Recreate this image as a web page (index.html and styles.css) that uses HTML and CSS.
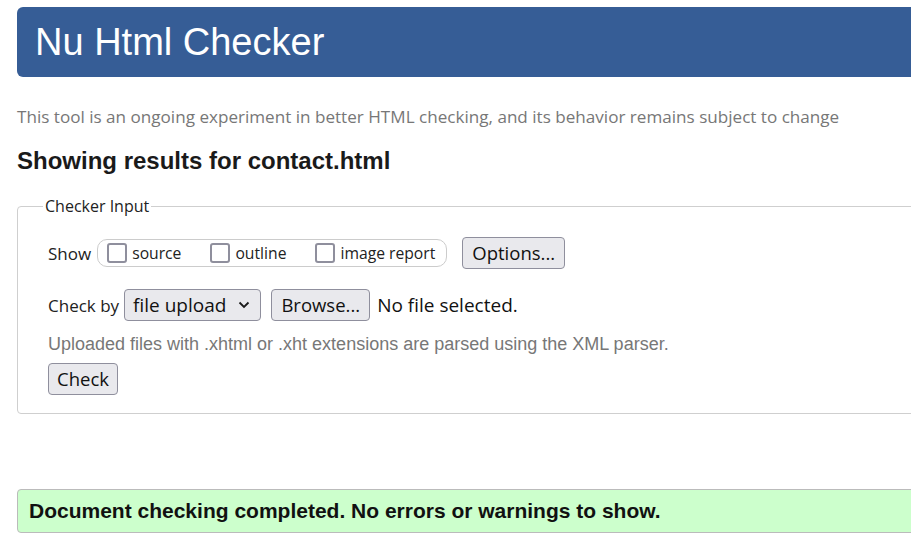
FILE: index.html
```html
<!DOCTYPE html>
<html lang="en">
<head>
<meta charset="utf-8">
<title>Nu Html Checker</title>
<link rel="stylesheet" href="styles.css">
</head>
<body>
<div class="page">
  <h1 class="title">Nu Html Checker</h1>
  <p class="lead">This tool is an ongoing experiment in better HTML checking, and its behavior remains subject to change</p>
  <h2 class="results">Showing results for contact.html</h2>
  <fieldset class="input">
    <legend class="legend">Checker Input</legend>
    <div class="row">
      <span class="label">Show</span>
      <span class="group">
        <label class="opt"><span class="cb"></span>source</label>
        <label class="opt"><span class="cb"></span>outline</label>
        <label class="opt"><span class="cb"></span>image report</label>
      </span>
      <button class="btn options">Options...</button>
    </div>
    <div class="row row2">
      <span class="label">Check by</span>
      <span class="select">file upload
        <svg class="chev" width="12" height="8" viewBox="0 0 12 8"><path d="M1.5 1.5 L6 6 L10.5 1.5" fill="none" stroke="#1a1a1a" stroke-width="1.8"/></svg>
      </span>
      <button class="btn">Browse...</button>
      <span class="nofile">No file selected.</span>
    </div>
    <p class="hint">Uploaded files with .xhtml or .xht extensions are parsed using the XML parser.</p>
    <button class="btn check">Check</button>
  </fieldset>
  <div class="success">Document checking completed. No errors or warnings to show.</div>
</div>
</body>
</html>
```
FILE: styles.css
```css
html, body {
  margin: 0;
  padding: 0;
  overflow: hidden;
  background: #fff;
}
body {
  padding: 7px 0 0 17px;
}
.page {
  width: 1000px;
}
.title {
  margin: 0;
  height: 70px;
  box-sizing: border-box;
  padding: 0 0 0 18px;
  background: #365d96;
  border-radius: 6px;
  color: #fff;
  font-family: "Liberation Sans", Arial, sans-serif;
  font-weight: normal;
  font-size: 38px;
  line-height: 70px;
}
.lead {
  margin: 28px 0 0 0;
  font-family: "Open Sans", sans-serif;
  font-size: 17.1px;
  line-height: 24px;
  color: #777;
}
.results {
  margin: 18px 0 0 0;
  font-family: "Liberation Sans", Arial, sans-serif;
  font-weight: bold;
  font-size: 24px;
  line-height: 28px;
  color: #1a1a1a;
}
.input {
  margin: 20px 0 0 0;
  padding: 20px 0 18px 30px;
  border: 1px solid #cfcfcf;
  border-radius: 4px;
  font-family: "Open Sans", sans-serif;
  color: #222;
}
.legend {
  margin-left: -5px;
  padding: 0 2px;
  font-size: 16px;
  color: #222;
}
.row {
  display: flex;
  align-items: center;
  height: 32px;
}
.row2 {
  margin-top: 20px;
}
.label {
  font-size: 17px;
  margin-right: 6px;
}
.row2 .label {
  margin-right: 5px;
}
.group {
  display: flex;
  align-items: center;
  height: 28px;
  box-sizing: border-box;
  border: 1px solid #ccc;
  border-radius: 10px;
  padding: 0 11px 0 9px;
  gap: 29px;
  margin-right: 15px;
}
.opt {
  display: flex;
  align-items: center;
  font-size: 15.7px;
  gap: 5px;
}
.cb {
  width: 20px;
  height: 20px;
  box-sizing: border-box;
  border: 2px solid #8f8f9d;
  border-radius: 3px;
  background: #fff;
}
.btn {
  font-family: "Open Sans", sans-serif;
  font-size: 18.5px;
  color: #111;
  background: #e9e9ed;
  border: 1px solid #8f8f9d;
  border-radius: 4px;
  height: 32px;
  padding: 0 9px;
  line-height: 30px;
}
.select {
  display: flex;
  align-items: center;
  box-sizing: border-box;
  height: 32px;
  padding: 0 10px 0 8px;
  background: #e9e9ed;
  border: 1px solid #8f8f9d;
  border-radius: 4px;
  font-size: 19px;
  color: #111;
  gap: 12px;
  margin-right: 10px;
}
.nofile {
  margin-left: 7px;
  font-size: 19px;
  color: #111;
}
.hint {
  margin: 12px 0 0 0;
  font-family: "Liberation Sans", Arial, sans-serif;
  font-size: 18px;
  line-height: 22px;
  color: #777;
}
.check {
  display: block;
  margin-top: 8px;
  padding: 0 8px;
}
.success {
  margin-top: 75px;
  height: 44px;
  box-sizing: border-box;
  padding: 0 11px;
  background: #ccffcc;
  border: 1px solid #bbb;
  border-radius: 4px;
  font-family: "Liberation Sans", Arial, sans-serif;
  font-weight: bold;
  font-size: 21px;
  line-height: 42px;
  color: #111;
}
```
